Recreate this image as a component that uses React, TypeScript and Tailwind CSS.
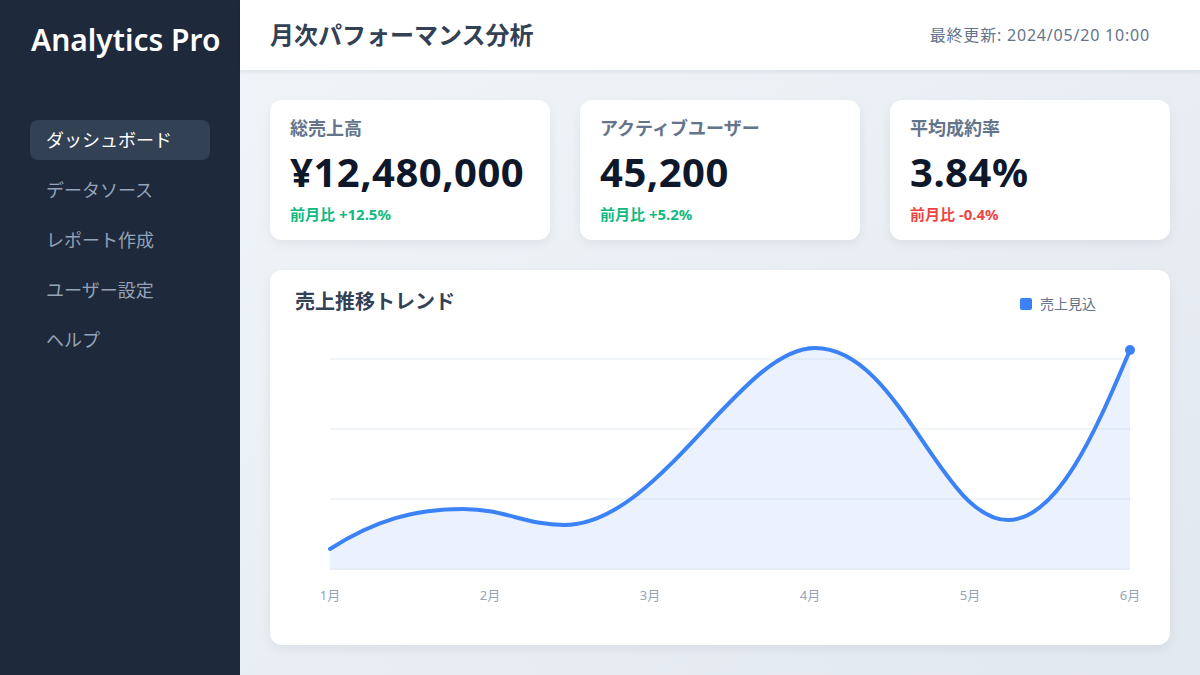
import React from 'react';

const navItems = ['ダッシュボード', 'データソース', 'レポート作成', 'ユーザー設定', 'ヘルプ'];

const stats = [
  { label: '総売上高', value: '¥12,480,000', change: '前月比 +12.5%', up: true },
  { label: 'アクティブユーザー', value: '45,200', change: '前月比 +5.2%', up: true },
  { label: '平均成約率', value: '3.84%', change: '前月比 -0.4%', up: false },
];

const months = ['1月', '2月', '3月', '4月', '5月', '6月'];

const curve =
  'M60,219 C105,190 145,179 193,179 C235,179 255,195 294,195 C390,195 470,18 545,18 C630,18 670,190 738,190 C790,190 830,90 860,20';

function TrendChart() {
  return (
    <svg width="900" height="315" viewBox="0 0 900 315" className="block">
      {[29, 99, 169].map((y) => (
        <line key={y} x1="60" x2="860" y1={y} y2={y} stroke="#eef2f6" strokeWidth="1.5" />
      ))}
      <path d={`${curve} L860,239 L60,239 Z`} fill="#3b82f6" fillOpacity="0.1" />
      <line x1="60" x2="860" y1="239" y2="239" stroke="#e2e8f0" strokeWidth="1.5" />
      <path d={curve} fill="none" stroke="#3b82f6" strokeWidth="4" strokeLinecap="round" />
      <circle cx="860" cy="20" r="5" fill="#3b82f6" />
      {months.map((m, i) => (
        <text
          key={m}
          x={60 + i * 160}
          y="270"
          textAnchor="middle"
          fontSize="13"
          fill="#94a3b8"
          fontFamily="'Noto Sans', 'Noto Sans CJK JP', sans-serif"
        >
          {m}
        </text>
      ))}
    </svg>
  );
}

export default function App() {
  return (
    <div
      className="flex h-[675px] w-[1200px] overflow-hidden"
      style={{ fontFamily: "'Noto Sans', 'Noto Sans CJK JP', sans-serif" }}
    >
      <aside className="flex w-[240px] shrink-0 flex-col bg-[#1e293b] px-[30px] pt-[20px]">
        <div className="whitespace-nowrap pl-[1px] text-[30px] font-semibold leading-[40px] text-white">
          Analytics Pro
        </div>
        <nav className="mt-[60px] flex flex-col gap-[10px]">
          {navItems.map((item, i) => (
            <div
              key={item}
              className={
                i === 0
                  ? 'flex h-[40px] items-center rounded-lg bg-[#334155] px-4 text-[18px] text-white'
                  : 'flex h-[40px] items-center rounded-lg px-4 text-[18px] text-[#94a3b8]'
              }
            >
              {item}
            </div>
          ))}
        </nav>
      </aside>

      <div className="flex flex-1 flex-col bg-gradient-to-br from-[#f1f5f9] to-[#e2e8f0]">
        <header className="relative z-10 flex h-[70px] shrink-0 items-center justify-between bg-white pl-[30px] pr-[50px] shadow-[0_2px_4px_rgba(15,23,42,0.08)]">
          <h1 className="text-[24px] font-bold text-[#334155]">月次パフォーマンス分析</h1>
          <span className="text-[16px] tracking-[0.8px] text-[#64748b]">最終更新: 2024/05/20 10:00</span>
        </header>

        <main className="flex flex-1 flex-col gap-[30px] p-[30px]">
          <div className="flex gap-[30px]">
            {stats.map((s) => (
              <div
                key={s.label}
                className="h-[140px] w-[280px] rounded-xl bg-white px-5 pt-[16px] shadow-[0_4px_12px_rgba(15,23,42,0.06)]"
              >
                <div className="text-[18px] font-bold leading-[24px] text-[#64748b]">{s.label}</div>
                <div className="mt-[8px] text-[40px] font-bold leading-[48px] tracking-[0.5px] text-[#0f172a]">
                  {s.value}
                </div>
                <div
                  className={
                    s.up
                      ? 'mt-[8px] text-[15px] font-bold leading-[20px] text-[#10b981]'
                      : 'mt-[8px] text-[15px] font-bold leading-[20px] text-[#ef4444]'
                  }
                >
                  {s.change}
                </div>
              </div>
            ))}
          </div>

          <div className="h-[375px] w-[900px] rounded-xl bg-white shadow-[0_4px_12px_rgba(15,23,42,0.06)]">
            <div className="flex h-[60px] items-start justify-between pl-[25px] pr-[74px] pt-[18px]">
              <h2 className="text-[20px] font-bold leading-[28px] text-[#334155]">売上推移トレンド</h2>
              <div className="flex items-center gap-2 pt-[5px]">
                <span className="h-3 w-3 rounded-[2px] bg-[#3b82f6]" />
                <span className="text-[14px] text-[#64748b]">売上見込</span>
              </div>
            </div>
            <TrendChart />
          </div>
        </main>
      </div>
    </div>
  );
}
